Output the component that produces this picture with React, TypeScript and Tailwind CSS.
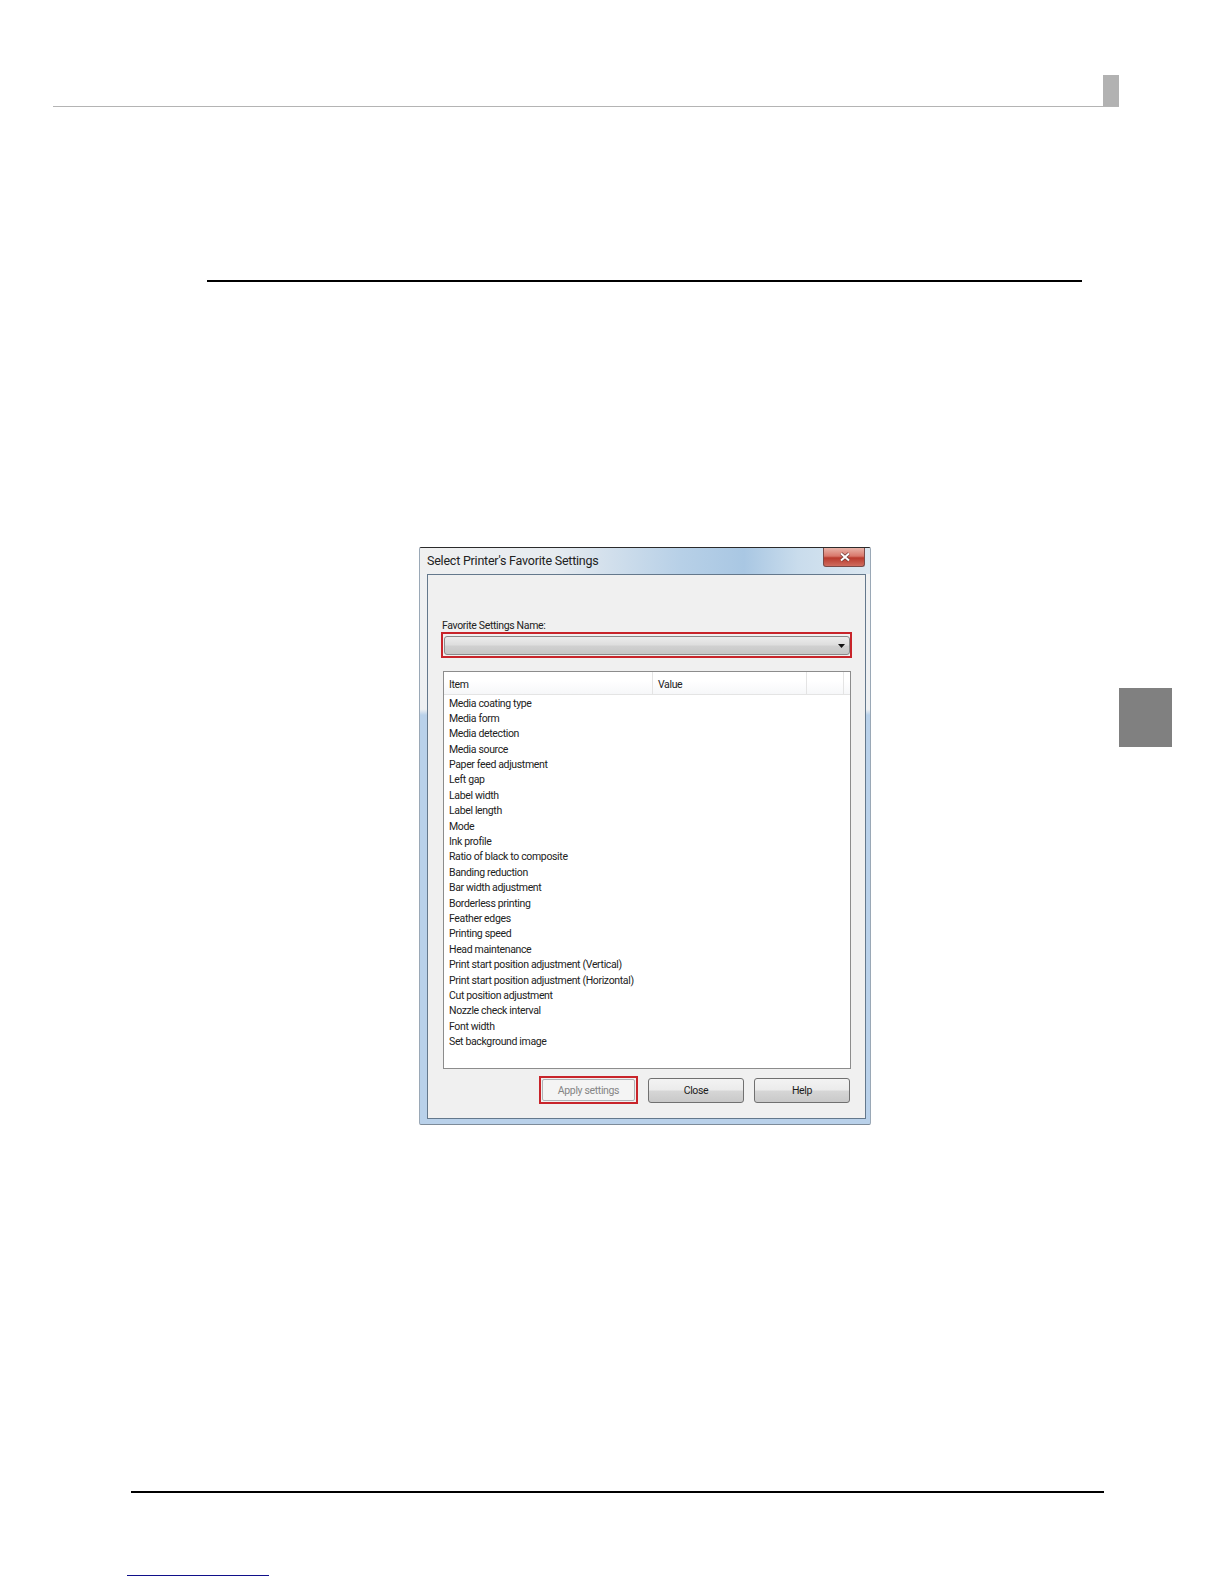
const items = [
  "Media coating type",
  "Media form",
  "Media detection",
  "Media source",
  "Paper feed adjustment",
  "Left gap",
  "Label width",
  "Label length",
  "Mode",
  "Ink profile",
  "Ratio of black to composite",
  "Banding reduction",
  "Bar width adjustment",
  "Borderless printing",
  "Feather edges",
  "Printing speed",
  "Head maintenance",
  "Print start position adjustment (Vertical)",
  "Print start position adjustment (Horizontal)",
  "Cut position adjustment",
  "Nozzle check interval",
  "Font width",
  "Set background image",
];

const btn =
  "box-border flex items-center justify-center h-[25px] mt-[2px] pt-[1px] rounded-[3px] border border-[#707070] bg-[linear-gradient(180deg,#f3f3f3_0%,#ebebeb_48%,#d6d6d6_52%,#c9c9c9_100%)] text-[#1c1c1c]";

const App = () => {
  return (
    <div className="w-[1224px] h-[1584px] bg-white flex flex-col font-['Roboto',sans-serif] text-[10.5px] tracking-[-0.35px] text-[#222]">
      {/* page header */}
      <div className="box-border ml-[53px] mt-[75px] w-[1066px] h-[32px] border-b border-[#b4b4b4] flex justify-end">
        <div className="w-[16px] h-full bg-[#b2b2b2]" />
      </div>
      <div className="ml-[207px] mt-[173px] w-[875px] h-[2px] bg-black" />

      <div className="mt-[265px] flex items-start">
        {/* dialog window */}
        <div className="box-border ml-[419px] w-[452px] h-[578px] flex flex-col rounded-[2px] border border-t-[#2b2b2b] border-x-[#9aa8b6] border-b-[#7d8b99] bg-[linear-gradient(180deg,#f0f1f2_0%,#eef0f2_28%,#b9d1ea_29%,#b9d1ea_100%)]">
          <div className="h-[26px] shrink-0 flex items-start justify-between pl-[7px] pr-[5px] rounded-t-[2px] bg-[linear-gradient(90deg,#f0f0f0_0%,#e6ebf0_30%,#b7d0e7_58%,#a9c7e3_72%,#c9dcec_84%,#dbe7f1_100%)]">
            <span className="mt-[4px] text-[12.5px] leading-[18px] tracking-[-0.22px] text-[#222]">
              Select Printer's Favorite Settings
            </span>
            <div className="box-border w-[42px] h-[19px] pl-[2px] flex items-center justify-center rounded-b-[3px] border border-t-0 border-[#7a4a48] bg-[linear-gradient(180deg,#e8b3a8_0%,#d9786c_45%,#b93a2d_55%,#cf6c5f_100%)]">
              <svg width="12" height="10" viewBox="0 0 12 10">
                <path d="M2 1.5 L10 8.5 M10 1.5 L2 8.5" stroke="#6e3a34" strokeWidth="3.4" />
                <path d="M2 1.5 L10 8.5 M10 1.5 L2 8.5" stroke="#fff" strokeWidth="2" />
              </svg>
            </div>
          </div>

          <div className="box-border ml-[7px] w-[439px] h-[545px] border border-[#64788c] bg-[#f0f0f0] flex flex-col">
            <div className="ml-[14px] mt-[45px] h-[12px] leading-[12px]">Favorite Settings Name:</div>

            <div className="box-border ml-[13px] w-[411px] h-[26px] border-2 border-[#c8242a] pl-[1px] pt-[1px]">
              <div className="box-border h-[19px] mt-[1px] rounded-[3px] border border-[#8a8a8a] bg-[linear-gradient(180deg,#ececec_0%,#dedede_45%,#d0d0d0_55%,#c6c6c6_100%)] flex items-center justify-end pr-[4px]">
                <svg width="7" height="4" viewBox="0 0 7 4">
                  <polygon points="0,0 7,0 3.5,4" fill="#111" />
                </svg>
              </div>
            </div>

            {/* settings list */}
            <div className="box-border ml-[15px] mt-[13px] w-[408px] h-[398px] border border-[#8c8c8c] bg-white flex flex-col">
              <div className="h-[23px] shrink-0 flex border-b border-[#e4e4e4] bg-[linear-gradient(180deg,#ffffff_0%,#ffffff_40%,#f6f7f9_100%)]">
                <div className="w-[209px] pl-[5px] leading-[26px] border-r border-[#e4e4e4]">Item</div>
                <div className="w-[154px] pl-[5px] leading-[26px] border-r border-[#e4e4e4]">Value</div>
                <div className="w-[37px] border-r border-[#e4e4e4]" />
              </div>
              <div className="flex flex-col pl-[5px] pt-[0.5px]">
                {items.map((item) => (
                  <div key={item} className="h-[15.4px] leading-[15.4px] whitespace-nowrap">
                    {item}
                  </div>
                ))}
              </div>
            </div>

            {/* buttons */}
            <div className="mt-[7px] flex items-start">
              <div className="box-border ml-[111px] w-[99px] h-[28px] border-2 border-[#c8242a] p-[1px]">
                <div className="box-border h-full pt-[2px] flex items-center justify-center rounded-[2px] border border-[#aeb2b5] bg-[#f4f4f4] text-[#858585]">
                  Apply settings
                </div>
              </div>
              <div className={`${btn} ml-[10px] w-[96px]`}>Close</div>
              <div className={`${btn} ml-[10px] w-[96px]`}>Help</div>
            </div>
          </div>
        </div>

        {/* chapter tab */}
        <div className="ml-[248px] mt-[141px] w-[53px] h-[59px] bg-[#808080]" />
      </div>

      {/* footer */}
      <div className="ml-[131px] mt-[366px] w-[973px] h-[2px] bg-black" />
      <div className="ml-[127px] mt-[82px] w-[142px] h-px bg-[#10108a]" />
    </div>
  );
};

export default App;
